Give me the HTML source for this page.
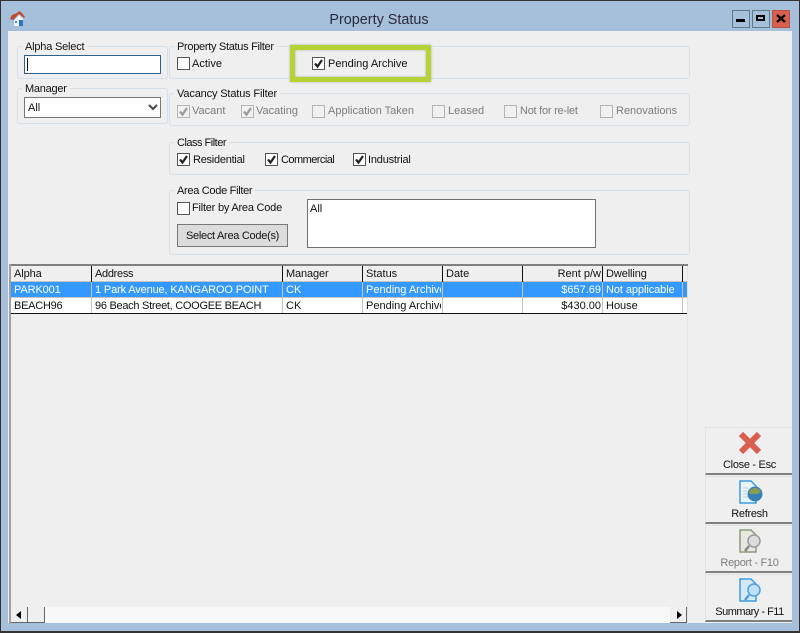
<!DOCTYPE html>
<html><head><meta charset="utf-8"><style>
html,body{margin:0;padding:0;width:800px;height:633px;overflow:hidden;background:#a6c0dc}
body{position:relative;font-family:"Liberation Sans",sans-serif;font-size:11px;color:#111}
div,span{position:absolute;box-sizing:border-box}
.t{white-space:nowrap;line-height:14px}
.g{border:1px solid #d5e0e8;border-radius:3px}
.l{background:#efefef;padding:0 3px;white-space:nowrap;line-height:14px;height:14px}
.c{width:13px;height:13px;border:1px solid #555;background:#fff}
.c.d{border:1px solid #b4b4b4;background:#f1f1f1}
.gr{color:#7c7c7c}
.v{width:1px;top:266px;height:16px;background:#111}
.s{width:1px;top:282px;height:31px;background:#c4c4c4}
.b{left:705px;width:87px;height:48px;background:#efefef;border-top:1px solid #e2e2e2;border-left:1px solid #e2e2e2;border-bottom:2px solid #808080}
.bt{left:0;width:87px;top:30px;text-align:center;line-height:14px;letter-spacing:-.3px}
.r{text-align:right}
.w{color:#fff}
</style></head><body>
<div style="left:0;top:0;width:800px;height:633px;border:1px solid #333;border-bottom-width:2px"></div>
<div style="left:8px;top:31px;width:784px;height:592px;background:#efefef"></div>
<svg style="position:absolute;left:9px;top:10px" width="18" height="17" viewBox="0 0 18 17"><path d="M5 11 L10 5 L14 9 V16 H5Z" fill="#f2f6fa"/><path d="M1 9 L3 5 L8 3 L10 1 L13 3 L16 7 L15 8 L10 4 L4 10Z" fill="#c0492f"/><rect x="10" y="10" width="4" height="6" fill="#2a76c0"/><rect x="6" y="11" width="2" height="2" fill="#3f8ad0"/></svg>
<div class="t" style="left:0;width:758px;top:12px;text-align:center;font-size:14.4px;line-height:17px;color:#2a2a3a">Property Status</div>

<div style="left:732px;top:10px;width:18px;height:18px;border:1px solid #5c7c84"></div>
<div style="left:736px;top:19px;width:9px;height:3px;background:#000"></div>
<div style="left:752px;top:10px;width:18px;height:18px;border:1px solid #5c7c84"></div>
<div style="left:756px;top:15px;width:9px;height:6px;border:2px solid #000"></div>
<div style="left:772px;top:10px;width:18px;height:18px;background:#d9604f;border:1px solid #b8503f"></div>
<svg style="position:absolute;left:776px;top:14px" width="10" height="9"><path d="M1 1 L9 8 M9 1 L1 8" stroke="#000" stroke-width="2.4"/></svg>

<div class="g" style="left:17px;top:46px;width:151px;height:33px"></div>
<div class="l" style="left:22px;top:40px;letter-spacing:-.2px">Alpha Select</div>
<div style="left:24px;top:55px;width:137px;height:19px;background:#fff;border:1px solid #2d6290"></div>
<div style="left:27px;top:58px;width:1px;height:13px;background:#000"></div>

<div class="g" style="left:17px;top:88px;width:151px;height:36px"></div>
<div class="l" style="left:22px;top:82px;letter-spacing:-.25px">Manager</div>
<div style="left:24px;top:97px;width:137px;height:21px;background:#fff;border:1px solid #777"></div>
<div class="t" style="left:28px;top:101px">All</div>
<svg style="position:absolute;left:148px;top:104px" width="10" height="7"><path d="M1 1 L5 5 L9 1" fill="none" stroke="#444" stroke-width="2"/></svg>

<div class="g" style="left:169px;top:46px;width:521px;height:33px"></div>
<div class="l" style="left:174px;top:40px;letter-spacing:-.3px">Property Status Filter</div>
<div class="c" style="left:177px;top:57px"></div>
<div class="t" style="left:192px;top:57px">Active</div>

<div style="left:290px;top:45px;width:141px;height:37px;border:5px solid #b5d334;box-shadow:0 0 2px #aaa,inset 0 0 2px #aaa"></div>
<div class="c" style="left:312px;top:57px"></div>
<svg style="position:absolute;left:312px;top:57px" width="13" height="13"><path d="M3 6.5 L5.5 9.5 L10 3" fill="none" stroke="#222" stroke-width="2.2"/></svg>
<div class="t" style="left:328px;top:57px">Pending Archive</div>

<div class="g" style="left:169px;top:93px;width:521px;height:33px"></div>
<div class="l" style="left:174px;top:87px;letter-spacing:-.15px">Vacancy Status Filter</div>
<div class="c d" style="left:177px;top:105px"></div>
<svg style="position:absolute;left:177px;top:105px" width="13" height="13"><path d="M3 6.5 L5.5 9.5 L10 3" fill="none" stroke="#999" stroke-width="2.2"/></svg>
<div class="t gr" style="left:192px;top:104px">Vacant</div>
<div class="c d" style="left:241px;top:105px"></div>
<svg style="position:absolute;left:241px;top:105px" width="13" height="13"><path d="M3 6.5 L5.5 9.5 L10 3" fill="none" stroke="#999" stroke-width="2.2"/></svg>
<div class="t gr" style="left:256px;top:104px">Vacating</div>
<div class="c d" style="left:312px;top:105px"></div>
<div class="t gr" style="left:328px;top:104px">Application Taken</div>
<div class="c d" style="left:432px;top:105px"></div>
<div class="t gr" style="left:448px;top:104px">Leased</div>
<div class="c d" style="left:504px;top:105px"></div>
<div class="t gr" style="left:520px;top:104px;letter-spacing:-.25px">Not for re-let</div>
<div class="c d" style="left:600px;top:105px"></div>
<div class="t gr" style="left:616px;top:104px">Renovations</div>

<div class="g" style="left:169px;top:142px;width:521px;height:33px"></div>
<div class="l" style="left:174px;top:136px;letter-spacing:-.5px">Class Filter</div>
<div class="c" style="left:177px;top:153px"></div>
<svg style="position:absolute;left:177px;top:153px" width="13" height="13"><path d="M3 6.5 L5.5 9.5 L10 3" fill="none" stroke="#222" stroke-width="2.2"/></svg>
<div class="t" style="left:193px;top:153px;letter-spacing:-.25px">Residential</div>
<div class="c" style="left:265px;top:153px"></div>
<svg style="position:absolute;left:265px;top:153px" width="13" height="13"><path d="M3 6.5 L5.5 9.5 L10 3" fill="none" stroke="#222" stroke-width="2.2"/></svg>
<div class="t" style="left:281px;top:153px;letter-spacing:-.55px">Commercial</div>
<div class="c" style="left:353px;top:153px"></div>
<svg style="position:absolute;left:353px;top:153px" width="13" height="13"><path d="M3 6.5 L5.5 9.5 L10 3" fill="none" stroke="#222" stroke-width="2.2"/></svg>
<div class="t" style="left:368px;top:153px;letter-spacing:-.2px">Industrial</div>

<div class="g" style="left:169px;top:190px;width:521px;height:65px"></div>
<div class="l" style="left:174px;top:184px;letter-spacing:-.3px">Area Code Filter</div>
<div class="c" style="left:177px;top:202px"></div>
<div class="t" style="left:192px;top:201px;letter-spacing:-.22px">Filter by Area Code</div>
<div style="left:177px;top:224px;width:111px;height:23px;background:#dcdcdc;border:1px solid #777"></div>
<div class="t" style="left:177px;width:111px;text-align:center;top:229px;letter-spacing:-.28px">Select Area Code(s)</div>
<div style="left:307px;top:199px;width:289px;height:49px;background:#fff;border:1px solid #707070"></div>
<div class="t" style="left:310px;top:202px">All</div>

<div style="left:9px;top:264px;width:679px;height:2px;background:#808080"></div>
<div style="left:9px;top:264px;width:2px;height:360px;background:#a0a0a0"></div>
<div style="left:687px;top:266px;width:1px;height:358px;background:#e4e4e4"></div>
<div style="left:11px;top:282px;width:676px;height:15px;background:#3399ff"></div>
<div style="left:11px;top:298px;width:676px;height:15px;background:#fff"></div>
<div style="left:11px;top:297px;width:676px;height:1px;background:#c4c4c4"></div>
<div style="left:11px;top:281px;width:676px;height:1px;background:#c4c4c4"></div>
<div style="left:11px;top:313px;width:676px;height:1px;background:#111"></div>
<div class="v" style="left:91px"></div><div class="v" style="left:282px"></div><div class="v" style="left:362px"></div><div class="v" style="left:442px"></div><div class="v" style="left:522px"></div><div class="v" style="left:602px"></div><div class="v" style="left:682px"></div>
<div class="s" style="left:91px"></div><div class="s" style="left:282px"></div><div class="s" style="left:362px"></div><div class="s" style="left:442px"></div><div class="s" style="left:522px"></div><div class="s" style="left:602px"></div><div class="s" style="left:682px"></div>

<div class="t" style="left:14px;top:267px;letter-spacing:-.1px">Alpha</div>
<div class="t" style="left:95px;top:267px;letter-spacing:-.3px">Address</div>
<div class="t" style="left:286px;top:267px;letter-spacing:-.12px">Manager</div>
<div class="t" style="left:366px;top:267px">Status</div>
<div class="t" style="left:446px;top:267px">Date</div>
<div class="t r" style="left:522px;width:79px;top:267px">Rent p/w</div>
<div class="t" style="left:606px;top:267px;letter-spacing:-.1px">Dwelling</div>

<div class="t w" style="left:14px;top:283px;letter-spacing:-.12px">PARK001</div>
<div class="t w" style="left:95px;top:283px;letter-spacing:-.14px">1 Park Avenue, KANGAROO POINT</div>
<div class="t w" style="left:286px;top:283px">CK</div>
<div class="t w" style="left:366px;top:283px;width:75px;overflow:hidden">Pending Archive</div>
<div class="t r w" style="left:522px;width:79px;top:283px">$657.69</div>
<div class="t w" style="left:606px;top:283px;letter-spacing:-.08px">Not applicable</div>

<div class="t" style="left:14px;top:299px;letter-spacing:-.25px">BEACH96</div>
<div class="t" style="left:95px;top:299px;letter-spacing:-.28px">96 Beach Street, COOGEE BEACH</div>
<div class="t" style="left:286px;top:299px">CK</div>
<div class="t" style="left:366px;top:299px;width:75px;overflow:hidden">Pending Archive</div>
<div class="t r" style="left:522px;width:79px;top:299px">$430.00</div>
<div class="t" style="left:606px;top:299px">House</div>

<div style="left:11px;top:607px;width:676px;height:16px;background:#f8f8f8"></div>
<div style="left:11px;top:607px;width:17px;height:16px;background:#f0f0f0;border-right:1px solid #666;border-bottom:1px solid #666"></div>
<svg style="position:absolute;left:15px;top:611px" width="8" height="9"><path d="M6 0 V8 L1 4Z" fill="#000"/></svg>
<div style="left:28px;top:607px;width:17px;height:16px;background:#efefef;border-right:1px solid #666;border-bottom:1px solid #666"></div>
<div style="left:670px;top:607px;width:17px;height:16px;background:#f0f0f0;border-right:1px solid #666;border-bottom:1px solid #666"></div>
<svg style="position:absolute;left:676px;top:611px" width="8" height="9"><path d="M1 0 V8 L6 4Z" fill="#000"/></svg>

<div class="b" style="top:427px"><div class="bt">Close - Esc</div>
<svg style="position:absolute;left:32px;top:2px" width="26" height="26"><path d="M3 4 L21 22 M21 4 L3 22" stroke="#d9604f" stroke-width="6"/></svg></div>
<div class="b" style="top:476px"><div class="bt">Refresh</div>
<svg style="position:absolute;left:32px;top:3px" width="26" height="26"><path d="M2 1 H13 L18 6 V23 H2Z" fill="#eaf4fb" stroke="#3f9be0" stroke-width="1.5"/><path d="M5 8 H10 M5 11 H9 M5 14 H9 M5 17 H10" stroke="#b9cfe0"/><circle cx="17" cy="14" r="7.5" fill="#3a7fb8"/><path d="M11 11 Q17 5 23 11 L20 14 L12 14Z" fill="#8a9c50"/></svg></div>
<div class="b" style="top:525px"><div class="bt" style="color:#7c7c7c">Report - F10</div>
<svg style="position:absolute;left:32px;top:3px" width="26" height="26"><path d="M2 1 H13 L18 6 V23 H2Z" fill="#e8e8e0" stroke="#8a9a7a" stroke-width="1.5"/><circle cx="16" cy="12" r="6" fill="#ddd" stroke="#999" stroke-width="1.5"/><path d="M11 17 L7 22" stroke="#888" stroke-width="2.5"/></svg></div>
<div class="b" style="top:574px"><div class="bt" style="letter-spacing:-.5px">Summary - F11</div>
<svg style="position:absolute;left:32px;top:3px" width="26" height="26"><path d="M2 1 H13 L18 6 V23 H2Z" fill="#d4e9f8" stroke="#3f9be0" stroke-width="1.5"/><circle cx="16" cy="12" r="6" fill="#bfe0f8" stroke="#4aa0e0" stroke-width="1.5"/><path d="M11 17 L7 22" stroke="#5a9ad0" stroke-width="2.5"/></svg></div>
</body></html>
